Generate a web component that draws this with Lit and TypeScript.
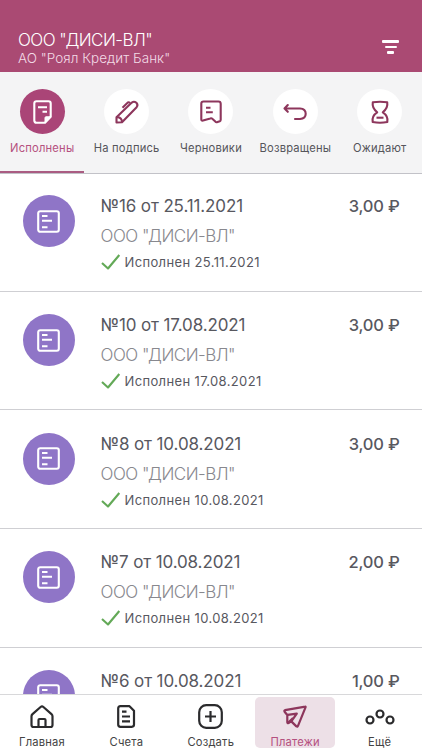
import { LitElement, html, css, svg } from "lit";
import { customElement, property } from "lit/decorators.js";

const icons: Record<string, unknown> = {
  done: svg`<path d="M1.3 3.5Q1.3 1.3 3.5 1.3H15.5Q17.7 1.3 17.7 3.5V16.8L12 22.7H3.5Q1.3 22.7 1.3 20.5Z"/><path d="M17.7 16.8H13Q12 16.8 12 17.8V22.7Z" fill="currentColor" stroke-width="1"/><path d="M5 7.3H14M9.5 11.8H14"/>`,
  pen: svg`<path d="M1.5 22.5V17.3L16.8 2.6Q19 .8 21.4 2.8Q23.4 5 21.6 7.2L7 22.2Z"/><path d="M2 17.3Q6.8 17.2 7 22M7.5 7.7L12.3 3Q13.5 1.6 15 3"/>`,
  draft: svg`<path d="M1.3 3.8Q1.3 1.5 3.6 1.5H18.4Q20.7 1.5 20.7 3.8V19.8Q20.7 20.8 19.8 21.2L16.8 22.2Q16 22.4 15.3 21.6L12.3 18.8Q11.5 18 10.3 18.4L3 20.6Q1.3 21 1.3 19.3Z"/><path d="M6 7.7H10.5M6 12.3H12.8"/>`,
  back: svg`<path d="M1.5 6.5H17Q22.7 6.8 22.7 11.7T17 17H12M4.8 3L1.5 6.5L4.8 9.8" stroke-linecap="round"/>`,
  wait: svg`<path d="M2.8 2.3Q10 1.2 17.2 2.3Q18.2 8 12.8 12.3Q18.5 16 17.3 22Q10 23.4 2.7 22Q1.5 16 7.2 12.3Q1.8 8 2.8 2.3Z"/><path d="M6.5 17.7H13.5"/>`,
  payment: svg`<rect x="1.2" y="1.2" width="20.6" height="20.6" rx="2"/><path d="M5 6H10.5M5 10.7H15M5 17.3H10.5"/>`,
  home: svg`<path d="M1.5 11.3Q1.5 10 2.5 9.1L10.6 2Q12 .9 13.4 2L21.5 9.1Q22.5 10 22.5 11.3V20Q22.5 22 20.5 22H3.5Q1.5 22 1.5 20Z"/><path d="M8.5 21.5V15Q8.5 14 9.5 14H14.5Q15.5 14 15.5 15V21.5"/>`,
  bill: svg`<path d="M1.2 3.4Q1.2 1.2 3.4 1.2H12.5L17 5.7V19.6Q17 21.8 14.8 21.8H3.4Q1.2 21.8 1.2 19.6Z"/><path d="M5 6.6H9.5M5 11.5H13M5 16.4H13"/>`,
  create: svg`<rect x="1.2" y="1.2" width="22.6" height="22.6" rx="7"/><path d="M12.5 7V18M7 12.5H18"/>`,
  send: svg`<path d="M22.3 1.6L2 5.2Q.9 5.6 1.6 6.7L4.3 10V17.3Q4.3 18.6 5.5 18L8.3 16.4L13.4 21.4Q14.6 22.2 15 20.8L22.6 2.2Q22.7 1.5 22.3 1.6Z"/><path d="M4.6 9.9L13.8 8.6L8.3 16.4M5 17.8L10 13"/>`,
  more: svg`<circle cx="5" cy="12" r="3.5"/><circle cx="15" cy="6" r="3.5"/><circle cx="25" cy="12" r="3.5"/>`,
  check: svg`<path d="M1 9L7 14.5L18.3 1"/>`,
};

const icon = (name: string, w: number, h: number, stroke = 2.1) => html`
  <svg width=${w} height=${h} viewBox="0 0 ${w} ${h}" fill="none" stroke="currentColor"
    stroke-width=${stroke} stroke-linejoin="round">${icons[name]}</svg>`;

const shared = css`
  * { box-sizing: border-box; }
  svg { display: block; flex: none; overflow: visible; }
`;

@customElement("payment-row")
class PaymentRow extends LitElement {
  @property() number = "";
  @property() date = "";
  @property() amount = "";

  static styles = [shared, css`
    :host { display: flex; box-sizing: border-box; flex: none; height: 118.65px; padding: 22.4px 22.5px 0; border-bottom: 1px solid #cfcfd3; color: #58585f; }
    .badge { flex: none; display: grid; place-items: center; width: 52px; height: 52px; border-radius: 50%; background: #8f75c7; color: #fff; }
    .body { flex: 1; padding-left: 26px; white-space: nowrap; }
    .top { display: flex; justify-content: space-between; font-size: 17px; line-height: 22px; letter-spacing: -0.12px; }
    .amount { font-size: 16.5px; font-weight: 480; letter-spacing: -0.22px; }
    .name { margin-top: 8px; font-size: 17px; line-height: 22px; font-weight: 300; color: #88888e; letter-spacing: -0.52px; }
    .status { display: flex; align-items: center; gap: 5px; margin-top: 6px; font-size: 13px; line-height: 18px; letter-spacing: .36px; }
    .check { color: #63a957; }
  `];

  render() {
    return html`
      <div class="badge">${icon("payment", 23, 23)}</div>
      <div class="body">
        <div class="top"><span>№${this.number} от ${this.date}</span><span class="amount">${this.amount} ₽</span></div>
        <div class="name">ООО "ДИСИ-ВЛ"</div>
        <div class="status"><span class="check">${icon("check", 19, 16)}</span><span>Исполнен ${this.date}</span></div>
      </div>`;
  }
}

@customElement("app-root")
class AppRoot extends LitElement {
  static styles = [shared, css`
    :host { display: flex; flex-direction: column; width: 422px; height: 750px; overflow: hidden; background: #fff; font-family: Inter, "Noto Sans", sans-serif; }
    header { flex: none; display: flex; justify-content: space-between; height: 72px; padding: 29px 23px 0 18px; background: #aa4a73; color: #fff; white-space: nowrap; }
    h1 { margin: 0; font-size: 17px; line-height: 22px; font-weight: 350; letter-spacing: -0.55px; }
    .bank { font-size: 13.5px; line-height: 15px; font-weight: 300; color: #f3dbe6; letter-spacing: .03px; }
    .filter { display: flex; flex-direction: column; align-items: center; gap: 3px; padding-top: 11px; }
    .bar { height: 2.7px; width: 17px; background: #fff; border-radius: 1px; }
    .bar.mid { width: 12px; }
    .bar.low { width: 7px; }
    .tabs { flex: none; display: grid; grid-template-columns: repeat(5, 84.4px); height: 102px; margin-bottom: -1px; background: #f4f4f5; box-shadow: inset 0 -1px #c2c2c8; }
    .tab { display: flex; flex-direction: column; align-items: center; height: 101px; padding-top: 17px; font-size: 11.2px; line-height: 16px; letter-spacing: .2px; color: #55555b; white-space: nowrap; }
    .circle { display: grid; place-items: center; width: 45px; height: 45px; margin-bottom: 6px; border-radius: 50%; background: #fff; color: #8d365c; }
    .tab.on { color: #b5507f; border-bottom: 2px solid #aa5c82; }
    .tab.on .circle { background: #aa4577; color: #fff; }
    .list { flex: 1; min-height: 0; overflow: hidden; display: flex; flex-direction: column; }
    nav { flex: none; display: grid; grid-template-columns: repeat(5, 84.4px); height: 56px; padding-top: 2px; border-top: 1px solid #d8d8da; background: #fff; }
    .item { display: flex; flex-direction: column; align-items: center; height: 51px; width: 80px; margin: 0 2px; border-radius: 5px; font-size: 11.2px; line-height: 12px; letter-spacing: .2px; color: #444; white-space: nowrap; }
    .glyph { display: grid; place-items: center; height: 39px; color: #2b2b2d; }
    .item.on { background: #ede0e7; color: #b5507f; }
    .item.on .glyph { color: #8d365c; }
  `];

  tabs: [string, string, number, number][] = [
    ["Исполнены", "done", 19, 24], ["На подпись", "pen", 24, 24], ["Черновики", "draft", 22, 24],
    ["Возвращены", "back", 24, 20], ["Ожидают", "wait", 20, 24],
  ];
  rows = [
    ["16", "25.11.2021", "3,00"], ["10", "17.08.2021", "3,00"], ["8", "10.08.2021", "3,00"],
    ["7", "10.08.2021", "2,00"], ["6", "10.08.2021", "1,00"],
  ];
  items: [string, string, number, number][] = [
    ["Главная", "home", 24, 23], ["Счета", "bill", 18, 23], ["Создать", "create", 25, 25],
    ["Платежи", "send", 24, 23], ["Ещё", "more", 30, 18],
  ];

  render() {
    return html`
      <header>
        <div><h1>ООО "ДИСИ-ВЛ"</h1><div class="bank">АО "Роял Кредит Банк"</div></div>
        <div class="filter"><div class="bar"></div><div class="bar mid"></div><div class="bar low"></div></div>
      </header>
      <div class="tabs">${this.tabs.map(([t, i, w, h], n) => html`
        <div class="tab ${n === 0 ? "on" : ""}"><div class="circle">${icon(i, w, h)}</div>${t}</div>`)}</div>
      <div class="list">${this.rows.map(([n, d, a]) => html`<payment-row number=${n} date=${d} amount=${a}></payment-row>`)}</div>
      <nav>${this.items.map(([t, i, w, h], n) => html`
        <div class="item ${n === 3 ? "on" : ""}"><div class="glyph">${icon(i, w, h, 2.2)}</div>${t}</div>`)}</nav>`;
  }
}
